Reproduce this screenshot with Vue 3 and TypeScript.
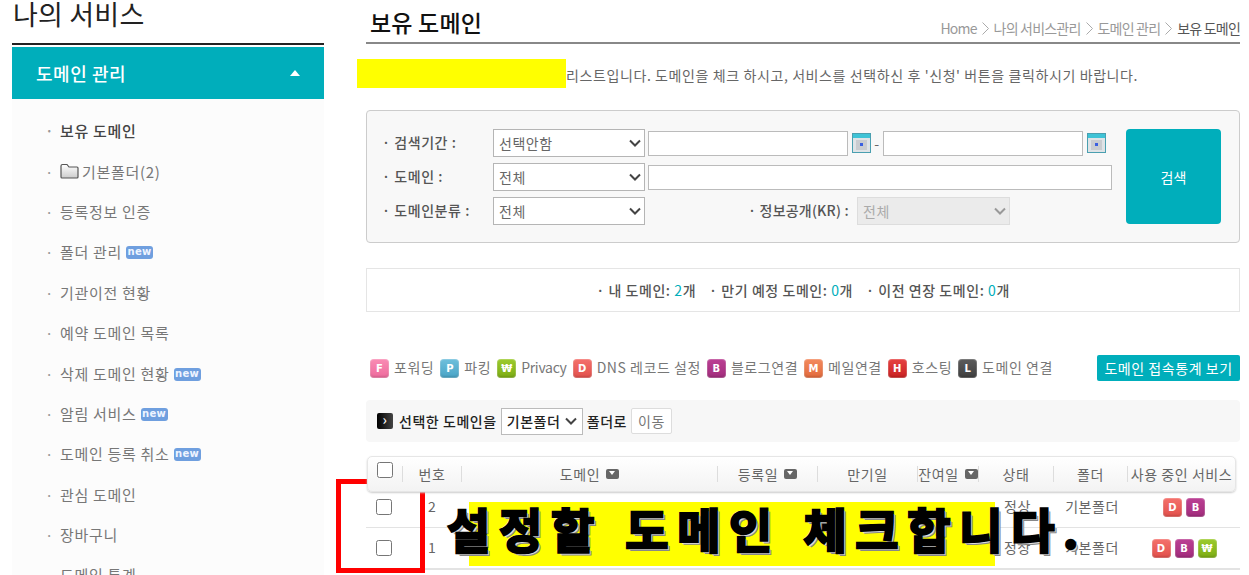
<script setup lang="ts">
const menu = [
  { label: '보유 도메인', active: true },
  { label: '기본폴더(2)', folder: true },
  { label: '등록정보 인증' },
  { label: '폴더 관리', isNew: true },
  { label: '기관이전 현황' },
  { label: '예약 도메인 목록' },
  { label: '삭제 도메인 현황', isNew: true },
  { label: '알림 서비스', isNew: true },
  { label: '도메인 등록 취소', isNew: true },
  { label: '관심 도메인' },
  { label: '장바구니' },
  { label: '도메인 통계' }
]

const crumbs = ['Home', '나의 서비스관리', '도메인 관리']

const legend = [
  { key: 'F', color: 'f', label: '포워딩' },
  { key: 'P', color: 'p', label: '파킹' },
  { key: '₩', color: 'w', label: 'Privacy', latin: true },
  { key: 'D', color: 'd', label: 'DNS 레코드 설정' },
  { key: 'B', color: 'b', label: '블로그연결' },
  { key: 'M', color: 'm', label: '메일연결' },
  { key: 'H', color: 'h', label: '호스팅' },
  { key: 'L', color: 'l', label: '도메인 연결' }
]

const columns = [
  { label: '번호', width: 59 },
  { label: '도메인', width: 256, sort: true },
  { label: '등록일', width: 100, sort: true },
  { label: '만기일', width: 100 },
  { label: '잔여일', width: 61, sort: true },
  { label: '상태', width: 75 },
  { label: '폴더', width: 74 },
  { label: '사용 중인 서비스', width: 108 }
]

const rows = [
  { no: 2, services: [{ key: 'D', color: 'd' }, { key: 'B', color: 'b' }] },
  { no: 1, services: [{ key: 'D', color: 'd' }, { key: 'B', color: 'b' }, { key: '₩', color: 'w' }] }
]
</script>

<template>
  <div class="page">
    <aside class="side">
      <h1 class="side-title">나의 서비스</h1>
      <div class="side-head">
        <span>도메인 관리</span>
        <i class="caret"></i>
      </div>
      <ul class="side-menu">
        <li v-for="m in menu" :key="m.label" :class="{ active: m.active }">
          <em>·</em>
          <svg v-if="m.folder" class="folder" width="19" height="16" viewBox="0 0 19 16">
            <defs>
              <linearGradient id="fold" x1="0" y1="0" x2="0" y2="1">
                <stop offset="0" stop-color="#fff" />
                <stop offset="1" stop-color="#ccc" />
              </linearGradient>
            </defs>
            <path d="M1 14V3C1 2 1.500 1.500 2.500 1.500H7L9 4H17C17.700 4 18 4.500 18 5V14C18 14.600 17.600 15 17 15H2C1.400 15 1 14.600 1 14Z" fill="url(#fold)" stroke="#555" stroke-width="1.200" />
          </svg>
          <span>{{ m.label }}</span>
          <b v-if="m.isNew" class="new">new</b>
        </li>
      </ul>
    </aside>

    <main class="main">
      <div class="title-row">
        <h2>보유 도메인</h2>
        <div class="crumb">
          <template v-for="c in crumbs" :key="c">
            <span>{{ c }}</span>
            <svg width="7" height="13" viewBox="0 0 7 13"><path d="M0.500 0.500L6.500 6.500L0.500 12.500" fill="none" stroke="#aaa" /></svg>
          </template>
          <strong>보유 도메인</strong>
        </div>
      </div>

      <p class="intro"><span class="mask"></span><span class="intro-text">리스트입니다. 도메인을 체크 하시고, 서비스를 선택하신 후 '신청' 버튼을 클릭하시기 바랍니다.</span></p>

      <section class="search">
        <div class="search-form">
          <div class="search-row">
            <label>· 검색기간 :</label>
            <select class="sel"><option>선택안함</option></select>
            <input class="date" type="text" />
            <svg class="cal" width="19" height="20" viewBox="0 0 19 20">
              <rect x="0.500" y="0.500" width="18" height="19" fill="#dfe3e6" stroke="#4a9fb0" />
              <rect x="1" y="1" width="17" height="4" fill="#3fc3d6" />
              <rect x="4" y="7" width="11" height="10" fill="#c9ccd0" />
              <rect x="8" y="10" width="3" height="3" fill="#3b5fe0" />
            </svg>
            <span class="dash">-</span>
            <input class="date" type="text" />
            <svg class="cal" width="19" height="20" viewBox="0 0 19 20">
              <rect x="0.500" y="0.500" width="18" height="19" fill="#dfe3e6" stroke="#4a9fb0" />
              <rect x="1" y="1" width="17" height="4" fill="#3fc3d6" />
              <rect x="4" y="7" width="11" height="10" fill="#c9ccd0" />
              <rect x="8" y="10" width="3" height="3" fill="#3b5fe0" />
            </svg>
          </div>
          <div class="search-row">
            <label>· 도메인 :</label>
            <select class="sel"><option>전체</option></select>
            <input class="domain" type="text" />
          </div>
          <div class="search-row">
            <label>· 도메인분류 :</label>
            <select class="sel"><option>전체</option></select>
            <label class="kr">· 정보공개(KR) :</label>
            <select class="sel kr-sel" disabled><option>전체</option></select>
          </div>
        </div>
        <button class="search-btn">검색</button>
      </section>

      <div class="stats">
        <span>· 내 도메인: <u>2</u>개</span>
        <span>· 만기 예정 도메인: <u>0</u>개</span>
        <span>· 이전 연장 도메인: <u>0</u>개</span>
      </div>

      <div class="legend">
        <span v-for="l in legend" :key="l.key" class="legend-item">
          <i class="badge" :class="l.color">{{ l.key }}</i>
          <span class="legend-label" :class="{ latin: l.latin }">{{ l.label }}</span>
        </span>
        <button class="stat-btn">도메인 접속통계 보기</button>
      </div>

      <div class="move">
        <i class="arrow">›</i>
        <span>선택한 도메인을</span>
        <select class="move-sel"><option>기본폴더</option></select>
        <span>폴더로</span>
        <button class="move-btn">이동</button>
      </div>

      <div class="table">
        <div class="thead">
          <div class="th check"><input type="checkbox" /></div>
          <div v-for="c in columns" :key="c.label" class="th" :style="{ width: c.width + 'px' }">
            {{ c.label }}<i v-if="c.sort" class="sort"></i>
          </div>
        </div>
        <div v-for="r in rows" :key="r.no" class="tr">
          <div class="td check"><input type="checkbox" /></div>
          <div class="td no">{{ r.no }}</div>
          <div class="td spacer"></div>
          <div class="td state">정상</div>
          <div class="td fold">기본폴더</div>
          <div class="td svc">
            <i v-for="s in r.services" :key="s.key" class="badge" :class="s.color">{{ s.key }}</i>
          </div>
        </div>
      </div>
    </main>

    <div class="note-box"></div>
    <div class="note-mark"></div>
    <div class="note-text">설정할 도메인 체크합니다.</div>
  </div>
</template>

<style>
html, body { margin: 0; background: #fff; overflow: hidden; }
</style>

<style scoped>
.page {
  position: relative;
  display: flex;
  width: 1249px;
  height: 575px;
  overflow: hidden;
  font-family: "Noto Sans CJK KR", "Noto Sans", sans-serif;
  font-size: 14px;
  letter-spacing: 0.55px;
  color: #666;
}
.side { width: 312px; margin-left: 12px; flex: none; }
.side-title {
  margin: 0;
  height: 43px;
  padding-left: 1px;
  font-size: 27px;
  font-weight: 400;
  line-height: 27px;
  letter-spacing: 0.2px;
  color: #222;
  border-bottom: 2px solid #222;
}
.side-head {
  display: flex;
  align-items: center;
  justify-content: space-between;
  height: 52px;
  margin-top: 2px;
  padding: 0 24px;
  background: #00aebb;
  color: #fff;
  font-size: 18px;
  font-weight: 500;
}
.caret {
  border-left: 5px solid transparent;
  border-right: 5px solid transparent;
  border-bottom: 6px solid #fff;
}
.side-menu {
  list-style: none;
  margin: 0;
  padding: 11.500px 0 0 35px;
  background: #fcfcfc;
  height: 480px;
}
.side-menu li {
  display: flex;
  align-items: center;
  height: 40.400px;
  font-size: 15px;
  letter-spacing: 0.7px;
  color: #777;
}
.side-menu li em { width: 13px; margin-left: -2px; margin-right: 2px; font-style: normal; color: #999; }
.side-menu li.active { color: #444; font-weight: 500; }
.folder { margin-right: 3px; }
.new {
  margin-top: 2px;
  margin-left: 4px;
  width: 27px;
  height: 13px;
  border-radius: 3px;
  background: #6f9fdf;
  color: #eef4ff;
  font-size: 10px;
  line-height: 12px;
  letter-spacing: 0.3px;
  font-weight: 700;
  text-align: center;
  font-family: "DejaVu Sans", sans-serif;
}

.main { width: 874px; margin-left: 42px; flex: none; }
.title-row {
  display: flex;
  justify-content: space-between;
  align-items: flex-end;
  height: 42px;
  border-bottom: 2px solid #888;
}
.title-row h2 {
  margin: 0 0 3px 4px;
  font-size: 23px;
  line-height: 34px;
  font-weight: 500;
  letter-spacing: 0.2px;
  color: #111;
}
.crumb {
  display: flex;
  align-items: center;
  gap: 5px;
  font-size: 14px;
  line-height: 20px;
  margin-bottom: 4px;
  color: #999;
  letter-spacing: -0.8px;
}
.crumb strong { font-weight: 400; color: #555; }
.intro {
  display: flex;
  align-items: center;
  margin: 15px 0 0 -9px;
  height: 29px;
  font-size: 14px;
  letter-spacing: 0.6px;
  color: #666;
}
.intro-text { padding-top: 2px; }
.mask { width: 209px; height: 29px; background: #ff0; flex: none; }

.search {
  display: flex;
  justify-content: space-between;
  box-sizing: border-box;
  height: 133px;
  margin-top: 22px;
  padding: 18px 18px 0 15px;
  background: #f8f8f8;
  border: 1px solid #ccc;
  border-radius: 4px;
}
.search-form { display: flex; flex-direction: column; gap: 6px; }
.search-row { display: flex; align-items: center; height: 28px; gap: 3px; }
.search-row label { width: 108px; padding-bottom: 2px; font-weight: 500; color: #555; flex: none; }
.sel, .move-sel {
  appearance: none;
  background-image: url("data:image/svg+xml,%3Csvg xmlns='http://www.w3.org/2000/svg' width='12' height='8' viewBox='0 0 12 8'%3E%3Cpath d='M1 1.500L6 6.500L11 1.500' fill='none' stroke='%23444' stroke-width='2'/%3E%3C/svg%3E");
  background-repeat: no-repeat;
  background-color: #fff;
  font-family: inherit;
  font-size: 14px;
  letter-spacing: inherit;
  border-radius: 0;
}
.sel {
  box-sizing: border-box;
  width: 152px;
  height: 28px;
  padding: 0 0 1px 5px;
  border: 1px solid #b5b5b5;
  background-position: right 3px center;
  color: #666;
}
.date, .domain {
  box-sizing: border-box;
  height: 25px;
  border: 1px solid #bbb;
  background: #fff;
  padding: 0;
  border-radius: 0;
}
.date { width: 200px; }
.domain { width: 464px; }
.cal { margin-left: 1px; }
.dash { width: 6px; text-align: center; }
.search-row .kr { width: 100px; margin-left: 100px; margin-right: 6px; white-space: nowrap; letter-spacing: 0.2px; }
.kr-sel {
  background-image: url("data:image/svg+xml,%3Csvg xmlns='http://www.w3.org/2000/svg' width='12' height='8' viewBox='0 0 12 8'%3E%3Cpath d='M1 1.500L6 6.500L11 1.500' fill='none' stroke='%23999' stroke-width='2'/%3E%3C/svg%3E");
  background-color: #ebebeb;
  color: #aaa;
  border-color: #ddd;
  width: 153px;
  opacity: 1;
}
.search-btn {
  width: 95px;
  height: 95px;
  border: 0;
  border-radius: 4px;
  background: #00aebb;
  color: #fff;
  font-family: inherit;
  font-size: 14px;
}

.stats {
  display: flex;
  justify-content: center;
  align-items: center;
  gap: 13px;
  height: 44px;
  box-sizing: border-box;
  margin-top: 25px;
  border: 1px solid #e5e5e5;
  font-weight: 500;
  color: #555;
}
.stats u { text-decoration: none; font-weight: 400; color: #00aebb; }

.legend {
  display: flex;
  align-items: center;
  height: 26px;
  margin-top: 43px;
  padding-left: 4px;
  color: #777;
}
.legend-item { display: flex; align-items: center; gap: 5px; margin-right: 6px; }
.legend-label { padding-bottom: 2px; }
.legend-label.latin { letter-spacing: -0.3px; }
.badge {
  display: inline-block;
  width: 19px;
  height: 19px;
  border-radius: 4px;
  color: #fff;
  font-size: 10px;
  font-style: normal;
  font-weight: 700;
  line-height: 19px;
  letter-spacing: 0;
  text-align: center;
  font-family: "DejaVu Sans", sans-serif;
  box-shadow: inset 0 0 0 1px rgba(255, 255, 255, 0.2), inset 0 -2px 2px rgba(0, 0, 0, 0.12);
}
.f { background: linear-gradient(#f98cb4, #ee6a9c); }
.p { background: linear-gradient(#6fc0dc, #48a3c6); }
.w { background: linear-gradient(#9ccb2e, #7cac14); }
.d { background: linear-gradient(#f4716c, #e2504b); }
.b { background: linear-gradient(#bb4094, #a22c7c); }
.m { background: linear-gradient(#f38a5e, #e26a3c); }
.h { background: linear-gradient(#e64242, #c92121); }
.l { background: linear-gradient(#5c5c5c, #3f3f3f); }
.stat-btn {
  margin-left: auto;
  width: 143px;
  height: 26px;
  padding: 0;
  border: 0;
  border-radius: 2px;
  background: #00aebb;
  color: #fff;
  font-family: inherit;
  font-size: 14px;
  letter-spacing: 0.55px;
}

.move {
  display: flex;
  align-items: center;
  gap: 4px;
  height: 42px;
  margin-top: 19px;
  padding-left: 11px;
  background: #f7f7f7;
  border-radius: 4px;
  color: #222;
  font-weight: 500;
}
.arrow {
  width: 16px;
  height: 16px;
  margin-right: 2px;
  border-radius: 2px;
  background: linear-gradient(90deg, #000, #444);
  color: #fff;
  font-style: normal;
  font-size: 14px;
  line-height: 13px;
  text-align: center;
}
.move-sel {
  box-sizing: border-box;
  width: 82px;
  height: 27px;
  padding-left: 5px;
  border: 1px solid #bbb;
  background-position: right 5px center;
  font-weight: 500;
  color: #222;
}
.move-btn {
  width: 41px;
  height: 26px;
  padding: 0;
  border: 1px solid #ddd;
  border-radius: 2px;
  background: #fff;
  color: #777;
  font-family: inherit;
  font-size: 14px;
  letter-spacing: 0.55px;
}

.table { margin-top: 14px; }
.thead {
  position: relative;
  z-index: 1;
  display: flex;
  align-items: center;
  box-sizing: border-box;
  width: 869px;
  height: 36px;
  margin-left: 1px;
  margin-bottom: -5px;
  background: linear-gradient(#fff, #f3f3f3);
  border: 1px solid #e6e6e6;
  border-radius: 5px;
  box-shadow: 0 1px 2px #ccc;
}
.th {
  display: flex;
  align-items: center;
  justify-content: center;
  gap: 6px;
  box-sizing: border-box;
  flex: none;
  height: 16px;
  border-left: 1px solid #ddd;
  color: #666;
  white-space: nowrap;
}
.th.check { width: 34px; border-left: 0; }
.th.check input { position: relative; top: -4px; }
.check input { width: 16px; height: 16px; margin: 0; }
.sort {
  width: 13px;
  height: 10px;
  border-radius: 2px;
  background: #666;
  position: relative;
}
.sort::after {
  content: "";
  position: absolute;
  left: 3px;
  top: 2px;
  border-left: 3.500px solid transparent;
  border-right: 3.500px solid transparent;
  border-top: 4px solid #fff;
}
.tr {
  display: flex;
  align-items: center;
  height: 40px;
  border-bottom: 1px solid #e3e3e3;
}
.tr:last-child { border-bottom-width: 2px; }
.td { flex: none; }
.td.check { width: 35px; display: flex; justify-content: center; box-sizing: border-box; }
.td.no { width: 59px; padding: 0 0 2px 27px; box-sizing: border-box; }
.td.spacer { width: 520px; }
.td.state { width: 75px; padding-bottom: 2px; text-align: center; }
.td.fold { width: 74px; padding-bottom: 2px; text-align: center; }
.td.svc { width: 110px; display: flex; justify-content: center; gap: 4px; }

.note-box {
  position: absolute;
  left: 336px;
  top: 479px;
  width: 79px;
  height: 84px;
  border: 5px solid #f00;
}
.note-mark {
  position: absolute;
  left: 469px;
  top: 502px;
  width: 526px;
  height: 64px;
  background: #ff0;
}
.note-text {
  position: absolute;
  left: 447px;
  top: 492px;
  font-size: 47px;
  line-height: 72px;
  font-weight: 700;
  letter-spacing: 8.700px;
  word-spacing: 3px;
  white-space: nowrap;
  color: #000;
  -webkit-text-stroke: 2.500px #000;
  text-shadow: -1px -1px 0 #fff, 2px 2px 0 #ddd, 3px 3px 0 #888;
}
</style>
